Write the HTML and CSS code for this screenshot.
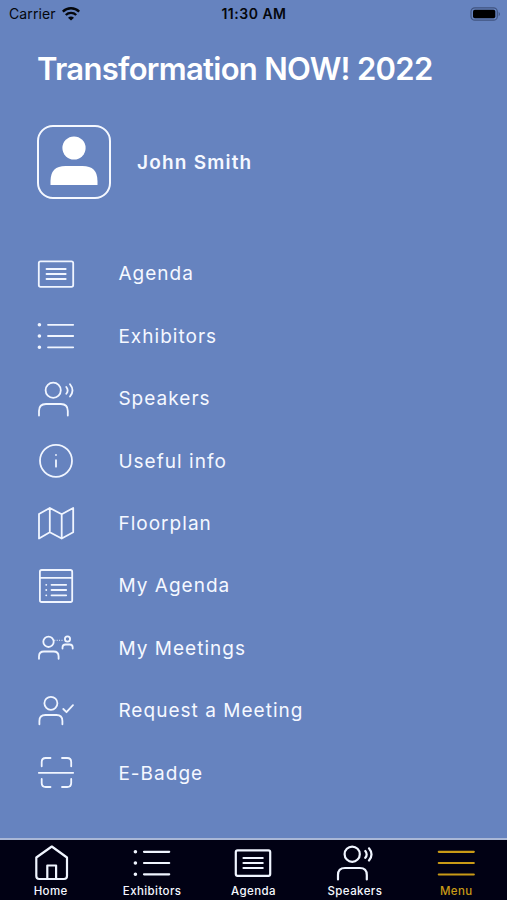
FILE: index.html
```
<!DOCTYPE html>
<html lang="en">
<head>
    <meta charset="UTF-8">
    <meta name="viewport" content="width=device-width, initial-scale=1.0">
    <title>Transformation NOW! 2022</title>
    <link rel="stylesheet" href="styles.css">
</head>
<body>
    <!-- Icons used by both the menu and the tab bar -->
    <svg class="icon-defs" width="0" height="0">
        <symbol id="icon-agenda" viewBox="0 0 40 40">
            <rect x="2.8" y="7.3" width="34.4" height="25.6" rx="1.8"/>
            <path d="M10.5 15h19.2M10.5 20h19.2M10.5 25h19.2"/>
        </symbol>
        <symbol id="icon-list" viewBox="0 0 40 40">
            <path d="M12 8.8h25.2M12 20h25.2M12 31.3h25.2"/>
            <path class="dots" d="M3.4 8.8h.01M3.4 20h.01M3.4 31.3h.01"/>
        </symbol>
        <symbol id="icon-speakers" viewBox="0 0 40 40">
            <circle cx="17.2" cy="11.2" r="7.6"/>
            <path d="M3 36.5v-4.5q0-7 7-7h14.800q7 0 7 7v4.500"/>
            <path d="M30.300 8q2.700 3.400 0 6.800M34 5.300q5 6.100 0 12.200"/>
        </symbol>
    </svg>

    <div class="app">
        <header class="status-bar">
            <div class="carrier">
                <span>Carrier</span>
                <svg class="wifi" width="18" height="14" viewBox="0 0 18 14">
                    <path d="M.8 4.600a11.800 11.800 0 0 1 16.400 0M3.800 8a7.500 7.500 0 0 1 10.400 0"/>
                    <path class="wifi-dot" d="M9 13.500L6 10.700q3-2.300 6 0z"/>
                </svg>
            </div>
            <div class="time">11:30 AM</div>
            <svg class="battery" width="31" height="14" viewBox="0 0 31 14">
                <rect class="battery-shell" x="1" y=".8" width="26.300" height="12.400" rx="3.800"/>
                <rect x="3" y="2.700" width="22.300" height="8.600" rx="1.800"/>
                <path class="battery-tip" d="M28.700 4.700q2.500 2.300 0 4.600z"/>
            </svg>
        </header>

        <main class="content">
            <h1 class="title">Transformation NOW! 2022</h1>

            <div class="profile">
                <div class="avatar">
                    <svg width="48" height="50" viewBox="0 0 48 50">
                        <circle cx="24" cy="12" r="11.600"/>
                        <path d="M.500 49V45q0-15 15-15h17q15 0 15 15v4z"/>
                    </svg>
                </div>
                <span class="profile-name">John Smith</span>
            </div>

            <nav class="menu">
                <a class="menu-item">
                    <svg class="icon"><use href="#icon-agenda"/></svg>
                    <span>Agenda</span>
                </a>
                <a class="menu-item">
                    <svg class="icon"><use href="#icon-list"/></svg>
                    <span>Exhibitors</span>
                </a>
                <a class="menu-item">
                    <svg class="icon"><use href="#icon-speakers"/></svg>
                    <span>Speakers</span>
                </a>
                <a class="menu-item">
                    <svg class="icon" viewBox="0 0 40 40">
                        <circle cx="20" cy="19.800" r="16"/>
                        <path d="M20 19.200v6.500M20 13.800v.300"/>
                    </svg>
                    <span>Useful info</span>
                </a>
                <a class="menu-item">
                    <svg class="icon" viewBox="0 0 40 40">
                        <path d="M3 11l10.800-6 11.900 6.300L37.200 5v24.200l-11.500 6.300-11.900-6.300L3 35.500zM13.800 5v24.200M25.700 11.300v24.200"/>
                    </svg>
                    <span>Floorplan</span>
                </a>
                <a class="menu-item">
                    <svg class="icon" viewBox="0 0 40 40">
                        <rect x="3.900" y="4" width="32.300" height="32" rx="1.800"/>
                        <path d="M4 11.800h32M15.500 18.800h14.700M15.500 24h14.700M15.500 29.300h14.700M10.200 18.800h.100M10.200 24h.100M10.200 29.300h.100"/>
                    </svg>
                    <span>My Agenda</span>
                </a>
                <a class="menu-item">
                    <svg class="icon" viewBox="0 0 40 40">
                        <circle cx="12.500" cy="13.800" r="5.200"/>
                        <path d="M3 30.800v-2.300q0-5 5-5h9.600q5 0 5 5v2.300"/>
                        <circle cx="31.500" cy="11" r="2.600"/>
                        <path d="M26.500 20.500v-1q0-3 3-3h4.200q3 0 3 3v1"/>
                        <path class="dashed" d="M18.300 12.300h9.200"/>
                    </svg>
                    <span>My Meetings</span>
                </a>
                <a class="menu-item">
                    <svg class="icon" viewBox="0 0 40 40">
                        <circle cx="14.900" cy="12.300" r="6.500"/>
                        <path d="M3.400 33.300V30q0-6 6-6h11q6 0 6 6v3.300M27.300 18l3.200 3.200 6.500-7"/>
                    </svg>
                    <span>Request a Meeting</span>
                </a>
                <a class="menu-item">
                    <svg class="icon" viewBox="0 0 40 40">
                        <path d="M2.800 19.800h34.400M5.700 13.300V9q0-4 4-4h4.800M26 5h5.200q4 0 4 4v4.300M5.700 26v4q0 4 4 4h4.800M26 34h5.200q4 0 4-4V26"/>
                    </svg>
                    <span>E-Badge</span>
                </a>
            </nav>
        </main>

        <footer class="tab-bar">
            <a class="tab">
                <svg class="icon" viewBox="0 0 40 40">
                    <path d="M5.300 14.500L20.800 3.500 36 14.500V33q0 3-3 3H8.300q-3 0-3-3zM16.300 36V22.500h8.800V36"/>
                </svg>
                <span>Home</span>
            </a>
            <a class="tab">
                <svg class="icon"><use href="#icon-list"/></svg>
                <span>Exhibitors</span>
            </a>
            <a class="tab">
                <svg class="icon"><use href="#icon-agenda"/></svg>
                <span>Agenda</span>
            </a>
            <a class="tab">
                <svg class="icon"><use href="#icon-speakers"/></svg>
                <span>Speakers</span>
            </a>
            <a class="tab active">
                <svg class="icon" viewBox="0 0 40 40">
                    <path d="M2.800 8.800h35M2.800 20h35M2.800 31.500h35"/>
                </svg>
                <span>Menu</span>
            </a>
        </footer>
    </div>
</body>
</html>
```

FILE: styles.css
```
body {
    margin: 0;
    font-family: Inter, 'Liberation Sans', sans-serif;
    background-color: #6683bf;
    color: #f5f8ff;
}

.icon-defs {
    display: block;
}

.app {
    display: flex;
    flex-direction: column;
    height: 100vh;
    overflow: hidden;
}

.status-bar {
    display: grid;
    grid-template-columns: 1fr auto 1fr;
    align-items: center;
    height: 27px;
    padding: 0 6px 0 9px;
    color: #05070c;
    font-size: 14px;
}

.carrier {
    display: flex;
    align-items: center;
    gap: 6px;
    letter-spacing: 0.1px;
}

.wifi {
    fill: none;
    stroke: #05070c;
    stroke-width: 2.4;
}

.wifi .wifi-dot {
    fill: #05070c;
    stroke: none;
}

.time {
    margin-right: 2px;
    font-weight: 600;
    letter-spacing: 0.5px;
}

.battery {
    justify-self: end;
}

.battery-shell {
    fill: none;
    stroke: #405480;
    stroke-width: 1.2;
}

.battery-tip {
    fill: #405480;
}

.content {
    flex: 1;
    padding: 0 36px;
}

.title {
    margin: 22px 0 0 1px;
    font-size: 31px;
    font-weight: 600;
    line-height: 40px;
    letter-spacing: -0.7px;
    white-space: nowrap;
    color: #fff;
}

.profile {
    display: flex;
    align-items: center;
    gap: 26px;
    margin: 36px 0 0 1px;
}

.avatar {
    display: flex;
    justify-content: center;
    box-sizing: border-box;
    width: 74px;
    height: 74px;
    padding-top: 9px;
    border: 2px solid #f5f8ff;
    border-radius: 16px;
}

.avatar svg {
    fill: #fff;
}

.profile-name {
    font-size: 19px;
    font-weight: 600;
    letter-spacing: 1.2px;
}

.menu {
    display: flex;
    flex-direction: column;
    margin-top: 43.7px;
}

.menu-item {
    display: flex;
    align-items: center;
    gap: 42.4px;
    height: 62.4px;
    font-size: 19px;
    letter-spacing: 1.03px;
}

.icon {
    flex: none;
    width: 40px;
    height: 40px;
    fill: none;
    stroke: #f0f5ff;
    stroke-width: 1.8;
    stroke-linecap: round;
    stroke-linejoin: round;
}

.dots {
    stroke-width: 3.6;
}

.dashed {
    stroke-width: 1;
    stroke-dasharray: 1 1.4;
    stroke-linecap: butt;
}

.tab-bar {
    display: grid;
    grid-template-columns: repeat(5, 1fr);
    box-sizing: border-box;
    height: 62px;
    padding-top: 3px;
    border-top: 2px solid #a9b7d6;
    background-color: #010114;
}

.tab {
    display: flex;
    flex-direction: column;
    align-items: center;
    gap: 1px;
    font-size: 11.5px;
    font-weight: 500;
    line-height: 14px;
    letter-spacing: 0.4px;
}

.tab .icon {
    stroke-width: 2.2;
}

.tab.active {
    color: #c99a16;
}

.tab.active .icon {
    stroke: #c99a16;
}
```
